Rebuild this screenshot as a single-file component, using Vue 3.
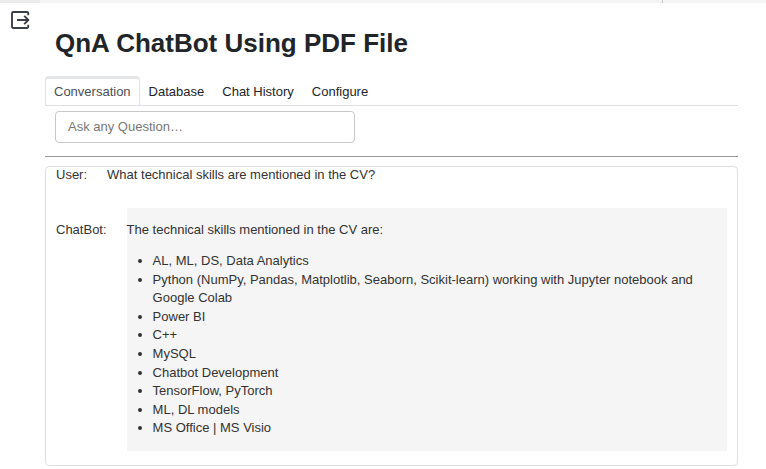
<script setup>
import { ref } from 'vue'

const tabs = ['Conversation', 'Database', 'Chat History', 'Configure']
const active = ref('Conversation')
const question = ref('')
const skills = [
  'AL, ML, DS, Data Analytics',
  'Python (NumPy, Pandas, Matplotlib, Seaborn, Scikit-learn) working with Jupyter notebook and Google Colab',
  'Power BI',
  'C++',
  'MySQL',
  'Chatbot Development',
  'TensorFlow, PyTorch',
  'ML, DL models',
  'MS Office | MS Visio',
]
</script>

<template>
  <div class="page">
    <div class="strip"><span class="strip-left"></span><span class="strip-right"></span></div>
    <div class="layout">
      <aside class="side">
        <svg class="exit" width="20" height="20" viewBox="0 0 20 20" fill="none" stroke="#3c3f44" stroke-width="1.9" stroke-linejoin="round">
          <path d="M18.2 5.2V3.2A1.2 1.2 0 0 0 17 2H3.2A1.2 1.2 0 0 0 2 3.2V16.8A1.2 1.2 0 0 0 3.2 18H17A1.2 1.2 0 0 0 18.2 16.8V14.8" />
          <path d="M7 10H18M14.2 5.8L18.4 10L14.2 14.2" />
        </svg>
      </aside>
      <main class="main">
        <h1 class="title">QnA ChatBot Using PDF File</h1>
        <nav class="tabs">
          <button
            v-for="tab in tabs"
            :key="tab"
            class="tab"
            :class="{ active: tab === active }"
            @click="active = tab"
          >{{ tab }}</button>
        </nav>
        <input v-model="question" class="ask" placeholder="Ask any Question…" />
        <hr class="rule" />
        <section class="chat">
          <div class="row user">
            <span>User:</span>
            <span>What technical skills are mentioned in the CV?</span>
          </div>
          <div class="row bot">
            <span class="bot-name">ChatBot:</span>
            <div class="answer">
              <p>The technical skills mentioned in the CV are:</p>
              <ul>
                <li v-for="skill in skills" :key="skill">{{ skill }}</li>
              </ul>
            </div>
          </div>
        </section>
      </main>
    </div>
  </div>
</template>

<style>
body {
  margin: 0;
  background: #fff;
}
</style>

<style scoped>
.page {
  width: 766px;
  height: 469px;
  box-sizing: border-box;
  overflow: hidden;
  background: #fff;
  color: #212529;
  font: 13px/18.57px "Liberation Sans", Arial, sans-serif;
}
.strip {
  height: 3px;
  display: flex;
  background: #f5f5f5;
}
.strip-left {
  width: 40px;
  background: #ececec;
}
.strip-right {
  flex: 1;
  margin-left: 622px;
  border-left: 1px solid #ccc;
}
.layout {
  display: flex;
}
.side {
  width: 45px;
  flex: none;
}
.exit {
  display: block;
  margin: 7px 0 0 10px;
}
.main {
  width: 693px;
}
.title {
  margin: 24px 0 17px 10px;
  font-size: 26px;
  line-height: 32px;
  font-weight: 700;
}
.tabs {
  display: flex;
  height: 29px;
  border-bottom: 1px solid #dee2e6;
}
.tab {
  box-sizing: border-box;
  height: 29px;
  padding: 3px 9px 0;
  border: 0;
  background: none;
  color: #212529;
  font: inherit;
}
.tab.active {
  height: 29px;
  padding: 0 8px;
  border: 1px solid #e2e3e5;
  border-top: 3px solid #e4e5e6;
  border-bottom: 0;
  border-radius: 4px 4px 0 0;
  color: #495057;
}
.ask {
  display: block;
  box-sizing: border-box;
  width: 300px;
  height: 32px;
  margin: 5px 0 0 10px;
  padding: 0 12px 2px;
  border: 1px solid #c8c8c8;
  border-radius: 4px;
  background: #fff;
  color: #333;
  font: inherit;
  outline: none;
}
.ask::placeholder {
  color: #777;
  opacity: 1;
}
.rule {
  height: 1px;
  margin: 13px 0 9px;
  border: 0;
  background: #999;
}
.chat {
  box-sizing: border-box;
  height: 300px;
  padding: 0 10px;
  border: 1px solid #dfdfdf;
  border-radius: 4px;
  color: #333;
}
.row {
  display: flex;
  gap: 20px;
}
.user {
  height: 42px;
  margin-top: -1px;
}
.bot-name {
  padding-top: 13px;
}
.answer {
  flex: 1;
  min-width: 0;
  padding: 13px 0;
  background: #f5f5f5;
}
.answer p {
  margin: 0 0 12.6px;
}
.answer ul {
  margin: 0;
  padding: 0 0 0 26px;
}
.answer li {
  padding-right: 20px;
}
</style>
